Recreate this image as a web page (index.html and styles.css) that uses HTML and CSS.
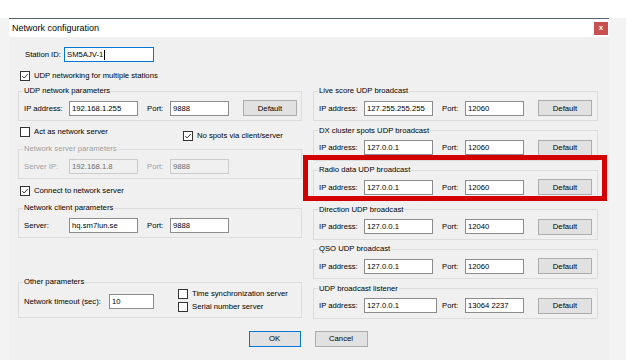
FILE: index.html
```html
<!DOCTYPE html>
<html lang="en">
<head>
<title>Network configuration</title>
<link rel="stylesheet" href="styles.css">
</head>
<body>
<div class="screen">
<div class="dialog">
    <div class="titlebar">
        <span class="title">Network configuration</span>
        <span class="close">x</span>
    </div>

    <div class="content">
        <div class="columns">

            <div class="col-left">
                <div class="station">
                    <span class="station-label">Station ID:</span>
                    <span class="field focus station-field">SM5AJV-1<span class="caret"></span></span>
                </div>

                <div class="check check-udp"><span class="box on"><svg viewBox="0 0 10 10"><path d="M1.5 5 L4 7.5 L8.5 2.5"/></svg></span>UDP networking for multiple stations</div>

                <fieldset class="group group-udp">
                    <legend>UDP network parameters</legend>
                    <div class="row">
                        <span>IP address:</span>
                        <span class="field ip">192.168.1.255</span>
                        <span>Port:</span>
                        <span class="field port">9888</span>
                        <button class="btn">Default</button>
                    </div>
                </fieldset>

                <div class="act-row">
                    <div class="check"><span class="box"></span>Act as network server</div>
                    <div class="check no-spots"><span class="box on"><svg viewBox="0 0 10 10"><path d="M1.5 5 L4 7.5 L8.5 2.5"/></svg></span>No spots via client/server</div>
                </div>

                <fieldset class="group disabled group-server">
                    <legend>Network server parameters</legend>
                    <div class="row">
                        <span>Server IP:</span>
                        <span class="field ip">192.168.1.8</span>
                        <span>Port:</span>
                        <span class="field port">9888</span>
                    </div>
                </fieldset>

                <div class="check check-connect"><span class="box on"><svg viewBox="0 0 10 10"><path d="M1.5 5 L4 7.5 L8.5 2.5"/></svg></span>Connect to network server</div>

                <fieldset class="group group-client">
                    <legend>Network client parameters</legend>
                    <div class="row">
                        <span>Server:</span>
                        <span class="field ip">hq.sm7iun.se</span>
                        <span>Port:</span>
                        <span class="field port">9888</span>
                    </div>
                </fieldset>

                <fieldset class="group group-other">
                    <legend>Other parameters</legend>
                    <div class="other">
                        <div class="timeout">
                            <span class="timeout-label">Network timeout (sec):</span>
                            <span class="field timeout-field">10</span>
                        </div>
                        <div class="other-checks">
                            <div class="check"><span class="box"></span>Time synchronization server</div>
                            <div class="check"><span class="box"></span>Serial number server</div>
                        </div>
                    </div>
                </fieldset>
            </div>

            <div class="col-right">
                <fieldset class="group">
                    <legend>Live score UDP broadcast</legend>
                    <div class="row">
                        <span>IP address:</span>
                        <span class="field ip">127.255.255.255</span>
                        <span>Port:</span>
                        <span class="field port">12060</span>
                        <button class="btn">Default</button>
                    </div>
                </fieldset>

                <fieldset class="group">
                    <legend>DX cluster spots UDP broadcast</legend>
                    <div class="row">
                        <span>IP address:</span>
                        <span class="field ip">127.0.0.1</span>
                        <span>Port:</span>
                        <span class="field port">12060</span>
                        <button class="btn">Default</button>
                    </div>
                </fieldset>

                <div class="marked">
                    <fieldset class="group">
                        <legend>Radio data UDP broadcast</legend>
                        <div class="row">
                            <span>IP address:</span>
                            <span class="field ip">127.0.0.1</span>
                            <span>Port:</span>
                            <span class="field port">12060</span>
                            <button class="btn">Default</button>
                        </div>
                    </fieldset>
                </div>

                <fieldset class="group">
                    <legend>Direction UDP broadcast</legend>
                    <div class="row">
                        <span>IP address:</span>
                        <span class="field ip">127.0.0.1</span>
                        <span>Port:</span>
                        <span class="field port">12040</span>
                        <button class="btn">Default</button>
                    </div>
                </fieldset>

                <fieldset class="group">
                    <legend>QSO UDP broadcast</legend>
                    <div class="row">
                        <span>IP address:</span>
                        <span class="field ip">127.0.0.1</span>
                        <span>Port:</span>
                        <span class="field port">12060</span>
                        <button class="btn">Default</button>
                    </div>
                </fieldset>

                <fieldset class="group">
                    <legend>UDP broadcast listener</legend>
                    <div class="row">
                        <span>IP address:</span>
                        <span class="field ip wide">127.0.0.1</span>
                        <span>Port:</span>
                        <span class="field port">13064 2237</span>
                        <button class="btn">Default</button>
                    </div>
                </fieldset>
            </div>

        </div>

        <div class="footer">
            <button class="btn btn-ok">OK</button>
            <button class="btn btn-cancel">Cancel</button>
        </div>
    </div>
</div>
</div>
</body>
</html>
```

FILE: styles.css
```css
body { margin: 0; background: #fff; font-family: "Liberation Sans", Arial, sans-serif; font-size: 7.7px; color: #000; }

.screen { margin-top: 18px; height: 342px; padding: 0 17px 0 9px; background: #f3f3f4; }
.dialog { width: 600px; height: 341px; border-top: 1px solid #56666a; background: #f0f0f0; }

/* title bar */
.titlebar { display: flex; align-items: center; height: 18px; padding-left: 3px; background: #fff; }
.title { font-size: 9px; }
.close { margin-left: auto; margin-right: 1px; width: 14px; height: 13px; line-height: 12px; text-align: center; background: #c75050; color: #fff; font-size: 8px; font-weight: bold; }

.content { padding: 10px 11px 0 9px; }
.columns { display: grid; grid-template-columns: 284px 285px; column-gap: 11px; align-items: start; }

/* group boxes */
.group { margin: 0; padding: 4px 4px 4px 5px; border: 1px solid #dcdcdc; min-width: 0; }
.group legend { padding: 0 1px; margin-left: -1px; line-height: 10px; }

.row { display: grid; grid-template-columns: 45px 78px 23px 73px 54px; align-items: center; height: 16px; white-space: nowrap; }

.field { display: inline-block; box-sizing: border-box; height: 15px; line-height: 13px; padding: 0 2px; border: 1px solid #8c8c8c; background: #fff; white-space: nowrap; overflow: hidden; }
.field.focus { border-color: #0078d7; }
.ip { width: 69px; }
.ip.wide { width: 73px; }
.port { width: 59px; }

.disabled { color: #a0a0a0; }
.disabled .field { background: #f0f0f0; border-color: #cccccc; color: #6d6d6d; }

.btn { box-sizing: border-box; height: 16px; padding: 0; border: 1px solid #adadad; background: #e1e1e1; font-family: inherit; font-size: 7.7px; color: #000; }
.row .btn { width: 54px; }

/* check boxes */
.check { display: flex; align-items: center; height: 12px; line-height: 12px; margin-left: 2px; white-space: nowrap; }
.box { display: inline-block; box-sizing: border-box; width: 10px; height: 10px; margin-right: 4px; border: 1px solid #333; background: #fff; flex: none; }
.box svg { display: block; width: 8px; height: 8px; fill: none; stroke: #222; stroke-width: 1.1; }

/* left column */
.station { display: flex; align-items: center; height: 15px; margin-left: 7px; }
.station-label { width: 39px; }
.station-field { width: 90px; }
.caret { display: inline-block; width: 1px; height: 10px; margin-left: 1px; background: #000; vertical-align: middle; }

.check-udp { margin-top: 8px; }
.group-udp { margin-top: 4px; }
.act-row { display: flex; align-items: flex-start; height: 16px; margin-top: 5px; }
.act-row .check:first-child { width: 161px; }
.no-spots { margin-top: 4px; }
.group-server { margin-top: 2px; }
.check-connect { margin-top: 6px; }
.group-client { margin-top: 6px; }
.group-other { margin-top: 39px; padding-top: 0; }

/* other parameters */
.other { display: flex; height: 26px; }
.timeout { display: flex; align-items: center; padding-top: 2px; }
.timeout-label { width: 85px; }
.timeout-field { width: 45px; }
.other-checks { margin-left: 22px; }
.other-checks .check { height: 13px; }

/* right column */
.col-right { display: flex; flex-direction: column; gap: 4.5px; margin-top: 39px; }
.marked { position: relative; }
.marked::after { content: ""; position: absolute; top: -10px; left: -10px; right: -9px; bottom: -1px; border: 5px solid #d40000; }

/* buttons */
.footer { display: flex; justify-content: center; gap: 14px; margin-top: 12px; }
.btn-ok { width: 52px; border-color: #0078d7; }
.btn-cancel { width: 53px; }
```
